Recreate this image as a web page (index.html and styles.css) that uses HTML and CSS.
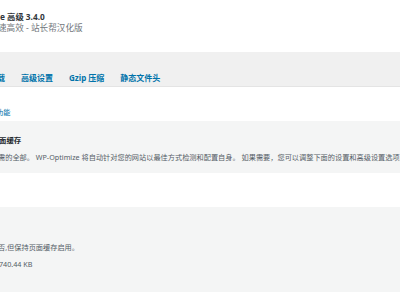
FILE: index.html
```html
<!DOCTYPE html>
<html lang="zh-CN">
<head>
    <meta charset="UTF-8">
    <title>WP-Optimize 高级 - 缓存</title>
    <link rel="stylesheet" href="styles.css">
</head>
<body>
    <div class="header">
        <h1 class="title">e 高级 3.4.0</h1>
        <div class="subtitle">速高效 - 站长帮汉化版</div>
    </div>

    <div class="tabs">
        <a href="#" class="tab tab-cut">载</a>
        <a href="#" class="tab">高级设置</a>
        <a href="#" class="tab">Gzip 压缩</a>
        <a href="#" class="tab">静态文件头</a>
    </div>

    <div class="links">
        <a href="#" class="feature-link">功能</a>
    </div>

    <div class="panel panel-intro">
        <h3 class="panel-title">面缓存</h3>
        <p class="panel-text">需的全部。 WP-Optimize 将自动针对您的网站以最佳方式检测和配置自身。 如果需要，您可以调整下面的设置和高级设置选项。</p>
    </div>

    <div class="panel panel-status">
        <p class="panel-text">否,但保持页面缓存启用。</p>
        <p class="panel-text size">740.44 KB</p>
    </div>
</body>
</html>
```

FILE: styles.css
```css
:root {
    --link-color: #0073aa;
    --heading-color: #23282d;
    --text-color: #555d66;
    --muted-color: #72777c;
    --tab-bg: #f0f0f0;
    --panel-bg: #f4f5f5;
}

* {
    margin: 0;
    padding: 0;
    box-sizing: border-box;
}

html, body {
    width: 400px;
    height: 300px;
    overflow: hidden;
}

body {
    font-family: "Noto Sans", "Noto Sans CJK SC", sans-serif;
    background: #fff;
    color: var(--text-color);
    white-space: nowrap;
}

/* Header */
.header {
    height: 52px;
    padding-top: 11px;
}

.title {
    font-size: 8.3px;
    font-weight: 700;
    line-height: 12px;
    color: #32373c;
}

.subtitle {
    font-size: 8.6px;
    line-height: 11px;
    color: var(--muted-color);
    margin-left: -2px;
}

/* Tabs */
.tabs {
    height: 35px;
    background: var(--tab-bg);
    border-bottom: 1px solid #e4e4e4;
    display: flex;
    align-items: flex-end;
    gap: 16px;
    padding-bottom: 2px;
    margin-left: -3px;
}

.tab {
    font-size: 8px;
    font-weight: 700;
    line-height: 12px;
    color: var(--link-color);
    text-decoration: none;
}

/* Links row */
.links {
    height: 34px;
    padding-top: 20px;
}

.feature-link {
    display: block;
    margin-left: -4px;
    font-size: 7.2px;
    line-height: 10px;
    color: var(--link-color);
    text-decoration: none;
}

/* Panels */
.panel {
    background: var(--panel-bg);
}

.panel-intro {
    height: 52px;
    padding-top: 14px;
    margin-bottom: 34px;
}

.panel-title {
    font-size: 7.4px;
    font-weight: 700;
    line-height: 10px;
    color: var(--heading-color);
    margin-left: -1px;
    margin-bottom: 7px;
}

.panel-text {
    font-size: 7.2px;
    line-height: 10px;
    margin-left: -2px;
}

.panel-status {
    height: 85px;
    padding-top: 35px;
}

.size {
    margin-top: 7px;
    margin-left: -1px;
}
```
